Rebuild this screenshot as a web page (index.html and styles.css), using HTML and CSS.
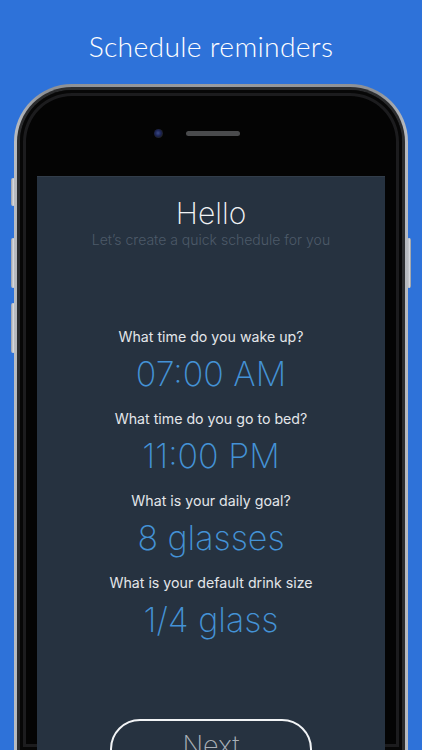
FILE: index.html
```html
<!DOCTYPE html>
<html>
<head>
<meta charset="utf-8">
<link rel="stylesheet" href="styles.css">
</head>
<body>
<div class="page">
  <h1 class="title">Schedule reminders</h1>
  <div class="phone">
    <span class="btn btn-mute"></span>
    <span class="btn btn-volup"></span>
    <span class="btn btn-voldown"></span>
    <span class="btn btn-power"></span>
    <div class="rim">
      <div class="band">
        <div class="bezel">
          <div class="top">
            <span class="camera"></span>
            <span class="speaker"></span>
          </div>
          <div class="screen">
            <h2 class="hello">Hello</h2>
            <p class="sub">Let’s create a quick schedule for you</p>
            <div class="questions">
              <p class="q">What time do you wake up?</p>
              <p class="v">07:00 AM</p>
              <p class="q">What time do you go to bed?</p>
              <p class="v">11:00 PM</p>
              <p class="q">What is your daily goal?</p>
              <p class="v">8 glasses</p>
              <p class="q">What is your default drink size</p>
              <p class="v">1/4 glass</p>
            </div>
            <div class="next">Next</div>
          </div>
        </div>
      </div>
    </div>
  </div>
</div>
</body>
</html>
```
FILE: styles.css
```css
* { box-sizing: border-box; }
html, body { margin: 0; padding: 0; }
body {
  width: 422px;
  height: 750px;
  overflow: hidden;
  background: #2e72d9;
}
.page {
  display: flex;
  flex-direction: column;
  align-items: center;
  height: 750px;
}
.title {
  flex-shrink: 0;
  margin: 0;
  padding-top: 29px;
  height: 84px;
  font-family: Lato, "Open Sans", sans-serif;
  font-weight: 300;
  font-size: 28.3px;
  line-height: 34px;
  color: #ffffff;
  letter-spacing: 0.3px;
}
.phone {
  position: relative;
  width: 394px;
  flex: 1 1 0;
  min-height: 0;
}
.btn {
  position: absolute;
  width: 4px;
  background: linear-gradient(90deg, #9a9da3, #d9dbe0 60%, #8e9196);
  border-radius: 2px;
}
.btn-mute { left: -3px; top: 94px; height: 28px; }
.btn-volup { left: -3px; top: 154px; height: 50px; }
.btn-voldown { left: -3px; top: 219px; height: 50px; }
.btn-power { right: -3px; top: 154px; height: 50px; }
.rim {
  position: relative;
  height: 100%;
  padding: 3px 3px 0 3px;
  border-radius: 58px 58px 0 0;
  background: linear-gradient(90deg, #b9bcc1, #8d9095 8%, #9a9ca0 50%, #8d9095 92%, #b9bcc1);
}
.band {
  height: 100%;
  padding: 3px 3px 0 3px;
  border-radius: 55px 55px 0 0;
  background: #2b2c2e;
}
.bezel {
  height: 100%;
  padding: 0 17px;
  border-radius: 52px 52px 0 0;
  background: #040404;
  box-shadow: inset 0 0 0 3px #070707, inset 0 0 0 6px #1c1c1e;
  display: flex;
  flex-direction: column;
}
.top {
  flex-shrink: 0;
  height: 86px;
  display: flex;
  align-items: center;
  justify-content: center;
  gap: 23px;
}
.camera {
  width: 9px;
  height: 9px;
  border-radius: 50%;
  background: radial-gradient(circle at 45% 45%, #3b4a86 0, #1a2150 45%, #202226 70%, #2c2c2e 100%);
  margin-left: -28px;
}
.speaker {
  width: 54px;
  height: 5px;
  border-radius: 3px;
  background: #4a4b4d;
}
.screen {
  flex: 1;
  background: #263240;
  display: flex;
  flex-direction: column;
  align-items: center;
  font-family: Inter, "Noto Sans", sans-serif;
  border-top: 1px solid #323d4a;
}
.hello {
  margin: 18px 0 0;
  font-weight: 200;
  font-size: 30px;
  line-height: 36px;
  color: #f2f4f6;
}
.sub {
  margin: 0;
  font-weight: 300;
  font-size: 14px;
  line-height: 18px;
  color: #4d5a69;
}
.questions {
  margin-top: 78px;
  display: flex;
  flex-direction: column;
  align-items: center;
}
.q {
  margin: 0;
  font-weight: 400;
  font-size: 14.2px;
  line-height: 20px;
  color: #e3e6ea;
}
.v {
  margin: 6px 0 14px;
  font-weight: 160;
  font-size: 34px;
  line-height: 42px;
  color: #4492d6;
}
.next {
  flex-shrink: 0;
  margin-top: 64px;
  width: 202px;
  height: 60px;
  border: 2px solid #f2f4f6;
  border-radius: 30px;
  text-align: center;
  font-weight: 200;
  font-size: 27px;
  line-height: 50px;
  color: #a9b0b8;
}
```
